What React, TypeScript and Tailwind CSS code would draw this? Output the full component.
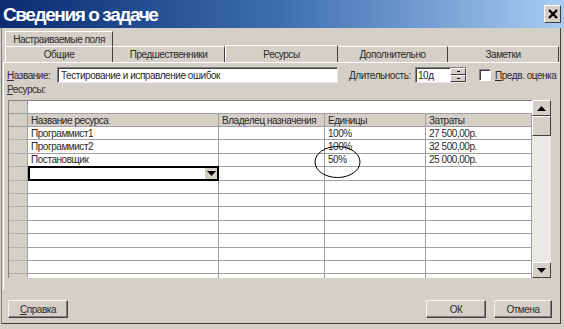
import React from "react";

const rows: { name: string; units: string; cost: string }[] = [
  { name: "Программист1", units: "100%", cost: "27 500,00р." },
  { name: "Программист2", units: "100%", cost: "32 500,00р." },
  { name: "Постановщик", units: "50%", cost: "25 000,00р." },
  { name: "", units: "", cost: "" },
  { name: "", units: "", cost: "" },
  { name: "", units: "", cost: "" },
  { name: "", units: "", cost: "" },
  { name: "", units: "", cost: "" },
  { name: "", units: "", cost: "" },
  { name: "", units: "", cost: "" },
  { name: "", units: "", cost: "" },
  { name: "", units: "", cost: "" },
];

function Raised({ className = "", children }: { className?: string; children?: React.ReactNode }) {
  return (
    <div className={`bg-[#d4d0c8] border border-t-white border-l-white border-r-[#404040] border-b-[#404040] ${className}`}>
      {children}
    </div>
  );
}

function Button({ children, className = "" }: { children: React.ReactNode; className?: string }) {
  return (
    <div className={`h-[18px] border border-t-[#f4f4f4] border-l-[#f4f4f4] border-r-[#404040] border-b-[#404040] bg-[#d4d0c8] flex items-center justify-center shadow-[inset_-1px_-1px_0_#808080] ${className}`}>
      {children}
    </div>
  );
}

function Arrow({ up }: { up?: boolean }) {
  return (
    <svg width="9" height="5" viewBox="0 0 9 5">
      {up ? <polygon points="0,5 9,5 4.5,0" fill="#000" /> : <polygon points="0,0 9,0 4.5,5" fill="#000" />}
    </svg>
  );
}

export default function App() {
  return (
    <div className="relative w-[564px] h-[329px] bg-[#d4d0c8] overflow-hidden whitespace-nowrap font-['Liberation_Sans',Arial,sans-serif] text-[10px] tracking-[-0.45px] text-[#2a2a2a]">
      {/* Title bar */}
      <div className="h-[28px] flex items-center justify-between bg-linear-to-r from-[#0c2a72] via-[#3d6fb0] to-[#a9ccf2] pl-[3px] pr-[3px]">
        <span className="text-white font-bold text-[19px] leading-none tracking-[-1.4px]">
          Сведения о задаче
        </span>
        <div className="w-[17px] h-[18px] bg-[#d4d0c8] border border-t-white border-l-white border-r-[#404040] border-b-[#404040] flex items-center justify-center">
          <svg width="10" height="10" viewBox="0 0 10 10">
            <path d="M1 1 L9 9 M9 1 L1 9" stroke="#000" strokeWidth="2.4" />
          </svg>
        </div>
      </div>

      {/* Dialog body */}
      <div className="h-[296px] ml-[1px] mr-[3px] border-l border-r border-b border-l-[#808080] border-r-[#404040] border-b-[#404040] flex flex-col">
        {/* Tabs row 1 */}
        <div className="mt-[3px] ml-[3px] flex h-[15px]">
          <div className="w-[108px] h-[15px] border-t border-l border-r border-t-white border-l-white border-r-[#404040] flex items-center justify-center">
            Настраиваемые поля
          </div>
        </div>
        {/* Tabs row 2 */}
        <div className="ml-[3px] flex h-[16px] relative z-10">
          <div className="w-[108px] h-[16px] border-t border-l border-r border-t-white border-l-white border-r-[#404040] flex items-center justify-center">Общие</div>
          <div className="w-[112px] h-[16px] border-t border-r border-t-white border-r-[#404040] flex items-center justify-center">Предшественники</div>
          <div className="w-[113px] h-[17px] -mt-[1px] border-t border-l border-r border-t-white border-l-white border-r-[#404040] bg-[#d4d0c8] flex items-center justify-center">Ресурсы</div>
          <div className="w-[110px] h-[16px] border-t border-r border-t-white border-r-[#404040] flex items-center justify-center">Дополнительно</div>
          <div className="w-[111px] h-[16px] border-t border-r border-t-white border-r-[#404040] flex items-center justify-center">Заметки</div>
        </div>

        {/* Panel */}
        <div className="ml-[1px] h-[228px] border-t border-l border-t-white border-l-white flex flex-col">
          {/* Name row */}
          <div className="mt-[4px] h-[16px] flex items-center pl-[3px]">
            <span className="w-[50px]"><span className="underline">Н</span>азвание:</span>
            <div className="w-[281px] h-[16px] bg-white border border-t-[#808080] border-l-[#808080] border-r-[#e8e8e8] border-b-[#e8e8e8] shadow-[inset_1px_1px_0_#404040] flex items-center pl-[3px]">
              Тестирование и исправление ошибок
            </div>
            <span className="ml-[11px] w-[66px]"><span className="underline">Д</span>лительность:</span>
            <div className="w-[52px] h-[16px] bg-white border border-t-[#808080] border-l-[#808080] border-r-[#e8e8e8] border-b-[#e8e8e8] shadow-[inset_1px_1px_0_#404040] flex items-center">
              <span className="flex-1 pl-[2px]">10д</span>
              <div className="w-[16px] h-full flex flex-col">
                <Raised className="flex-1 flex items-center justify-center"><div className="w-[3px] h-[1px] bg-black" /></Raised>
                <Raised className="flex-1 flex items-center justify-center"><div className="w-[3px] h-[1px] bg-black" /></Raised>
              </div>
            </div>
            <div className="ml-[12px] w-[12px] h-[12px] bg-white border border-t-[#808080] border-l-[#808080] border-r-white border-b-white shadow-[inset_1px_1px_0_#404040]" />
            <span className="ml-[4px]"><span className="underline">П</span>редв. оценка</span>
          </div>

          {/* Resources label */}
          <div className="h-[17px] pl-[3px] flex items-end pb-[3px]">
            <span><span className="underline">Р</span>есурсы:</span>
          </div>

          {/* Grid */}
          <div className="ml-[4px] w-[543px] h-[178px] flex">
            <div className="w-[524px] h-full overflow-hidden flex flex-col bg-white border-t border-l border-t-[#808080] border-l-[#808080]">
              {/* edit row */}
              <div className="h-[13px] shrink-0 flex">
                <div className="w-[19px] bg-[#d4d0c8] border-r border-b border-r-[#a0a0a0] border-b-[#a0a0a0]" />
                <div className="flex-1 bg-white border-b border-b-[#a0a0a0]" />
              </div>
              {/* header */}
              <div className="h-[13px] shrink-0 flex bg-[#d4d0c8]">
                <div className="w-[19px] border-r border-b border-[#a0a0a0]" />
                <div className="w-[191px] border-r border-b border-[#a0a0a0] pl-[3px] flex items-center">Название ресурса</div>
                <div className="w-[106px] border-r border-b border-[#a0a0a0] pl-[3px] flex items-center">Владелец назначения</div>
                <div className="w-[101px] border-r border-b border-[#a0a0a0] pl-[3px] flex items-center">Единицы</div>
                <div className="w-[106px] border-r border-b border-[#a0a0a0] pl-[3px] flex items-center">Затраты</div>
              </div>
              {rows.map((r, i) => (
                <div key={i} className="h-[13.4px] shrink-0 flex">
                  <div className="w-[19px] bg-[#d4d0c8] border-r border-b border-r-[#a0a0a0] border-b-[#b4b0a8]" />
                  {i === 3 ? (
                    <div className="w-[191px] border-2 border-black -mt-[1px] h-[15px] flex justify-end items-stretch">
                      <div className="w-[12px] bg-[#d4d0c8] flex items-center justify-center">
                        <Arrow />
                      </div>
                    </div>
                  ) : (
                    <div className="w-[191px] border-r border-b border-[#a0a0a0] pl-[3px] flex items-center">{r.name}</div>
                  )}
                  <div className="w-[106px] border-r border-b border-[#a0a0a0]" />
                  <div className="w-[101px] border-r border-b border-[#a0a0a0] pl-[3px] flex items-center">{r.units}</div>
                  <div className="w-[106px] border-r border-b border-[#a0a0a0] pl-[3px] flex items-center">{r.cost}</div>
                </div>
              ))}
            </div>
            {/* scrollbar */}
            <div className="w-[19px] h-full bg-[#ebe9e4] flex flex-col justify-between">
              <div className="flex flex-col">
                <Raised className="h-[16px] flex items-center justify-center"><Arrow up /></Raised>
                <Raised className="h-[20px]" />
              </div>
              <Raised className="h-[16px] flex items-center justify-center"><Arrow /></Raised>
            </div>
          </div>
        </div>

        {/* Buttons */}
        <div className="mt-[10px] flex items-center pl-[6px] pr-[8px]">
          <Button className="w-[60px]"><span><span className="underline">С</span>правка</span></Button>
          <div className="flex-1" />
          <Button className="w-[60px]">ОК</Button>
          <Button className="w-[58px] ml-[8px]">Отмена</Button>
        </div>
      </div>

      {/* Hand-drawn annotation ellipse */}
      <svg className="absolute left-[313px] top-[145px]" width="49" height="34" viewBox="0 0 49 34">
        <ellipse cx="24.5" cy="17" rx="22.5" ry="15.5" fill="none" stroke="#000" strokeWidth="1" />
      </svg>
    </div>
  );
}
